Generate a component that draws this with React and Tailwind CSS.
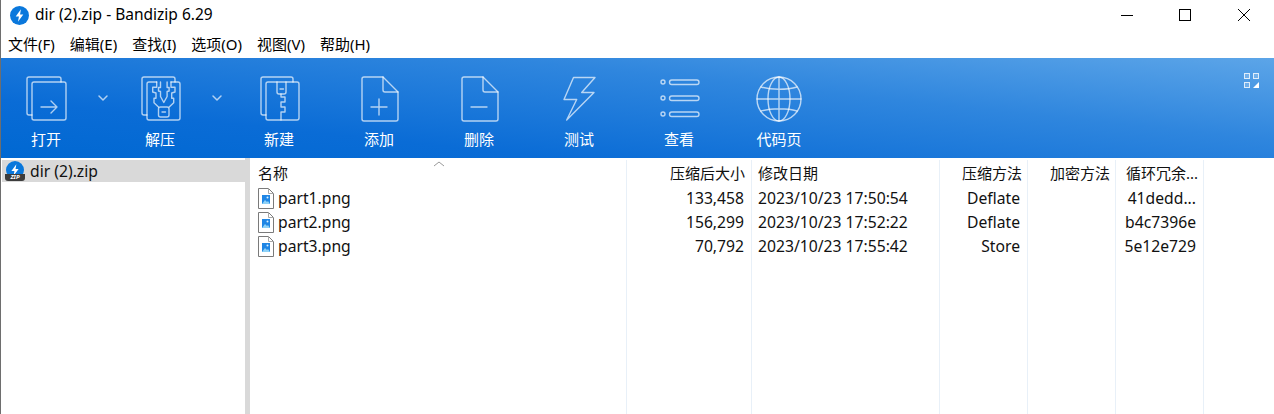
const stroke = { fill: 'none', stroke: 'white', strokeOpacity: 0.68, strokeWidth: 1.4, strokeLinejoin: 'round', strokeLinecap: 'round' };

const Tool = ({ w = 'w-[100px]', label, children }) => (
  <div className={`${w} flex flex-col items-center`}>
    <svg width="48" height="48" viewBox="0 0 48 48" {...stroke}>{children}</svg>
    <span className="mt-[6px] text-[15px] leading-[20px] text-white">{label}</span>
  </div>
);

const Chevron = () => (
  <div className="w-[24px] pt-[19px] flex justify-center">
    <svg width="12" height="8" viewBox="0 0 12 8" {...stroke} strokeWidth="1.5"><path d="M2 2l4 4 4-4" /></svg>
  </div>
);

const tools = [
  { label: '新建', icon: (
    <>
      <path d="M11 40H8a2 2 0 0 1-2-2V4a2 2 0 0 1 2-2h28a2 2 0 0 1 2 2v3" />
      <path d="M22 7h-9a2 2 0 0 0-2 2v34a2 2 0 0 0 2 2h29a2 2 0 0 0 2-2V9a2 2 0 0 0-2-2H31" />
      <path d="M22 7v10a2 2 0 0 0 2 2h5a2 2 0 0 0 2-2V7z" />
      <path d="M25 14h3.5" />
      <path d="M26 19v3h4v5h-4v5h4v5h-4v8" />
    </>
  ) },
  { label: '添加', icon: (
    <>
      <path d="M28 2H9a2 2 0 0 0-2 2v40a2 2 0 0 0 2 2h32a2 2 0 0 0 2-2V17z" />
      <path d="M28 2v13a2 2 0 0 0 2 2h13" />
      <path d="M24 24v16M16 32h16" />
    </>
  ) },
  { label: '删除', icon: (
    <>
      <path d="M28 2H9a2 2 0 0 0-2 2v40a2 2 0 0 0 2 2h32a2 2 0 0 0 2-2V17z" />
      <path d="M28 2v13a2 2 0 0 0 2 2h13" />
      <path d="M16 32h16" />
    </>
  ) },
  { label: '测试', icon: <path d="M18.5 2.5H40L26.7 17.5H39L11.7 45l10-20.5H9z" /> },
  { label: '查看', icon: (
    <>
      <circle cx="8" cy="7" r="2" />
      <circle cx="8" cy="23" r="2" />
      <circle cx="8" cy="39" r="2" />
      <rect x="14.5" y="5" width="29.5" height="4.5" rx="2.2" />
      <rect x="14.5" y="21" width="29.5" height="4.5" rx="2.2" />
      <rect x="14.5" y="37" width="29.5" height="4.5" rx="2.2" />
    </>
  ) },
  { label: '代码页', icon: (
    <>
      <circle cx="24" cy="24" r="22" />
      <ellipse cx="24" cy="24" rx="11" ry="22" />
      <path d="M24 2v44M2 24h44M6 12c10 3 26 3 36 0M6 36c10-3 26-3 36 0" />
    </>
  ) },
];

const columns = [
  { title: '压缩后大小', w: 'w-[125px]', head: 'text-right pr-[6px]', cls: 'text-right pr-[7px]', rows: ['133,458', '156,299', '70,792'] },
  { title: '修改日期', w: 'w-[188px]', head: 'text-left pl-[6px]', cls: 'text-left pl-[6px]', rows: ['2023/10/23 17:50:54', '2023/10/23 17:52:22', '2023/10/23 17:55:42'] },
  { title: '压缩方法', w: 'w-[88px]', head: 'text-right pr-[5px]', cls: 'text-right pr-[7px]', rows: ['Deflate', 'Deflate', 'Store'] },
  { title: '加密方法', w: 'w-[88px]', head: 'text-right pr-[5px]', cls: 'text-right pr-[7px]', rows: ['', '', ''] },
  { title: '循环冗余...', w: 'w-[88px]', head: 'text-right pr-[5px]', cls: 'text-right pr-[7px]', rows: ['41dedd...', 'b4c7396e', '5e12e729'] },
];

const files = ['part1.png', 'part2.png', 'part3.png'];

const Bolt = ({ size, cls = '' }) => (
  <svg className={cls} width={size} height={size} viewBox="0 0 20 20">
    <circle cx="10" cy="10" r="10" fill="#0a78dc" />
    <path d="M11.5 3.5 6 11h3.4l-1 5.5L14 9h-3.4z" fill="white" />
  </svg>
);

const FileIcon = () => (
  <svg width="16" height="21" viewBox="0 0 16 21">
    <path d="M.5.5h10l5 5v15H.5z" fill="white" stroke="#7a7a7a" />
    <path d="M10.5.5v5h5" fill="none" stroke="#a8a8a8" />
    <rect x="4" y="7" width="8" height="9" fill="#1f86e5" />
    <path d="M4 16l3-4 2 2 1-1 2 3z" fill="#8fd2f7" />
    <circle cx="9.5" cy="9.5" r="1" fill="#d9f0ff" />
  </svg>
);

const Cell = ({ children, cls = '' }) => (
  <div className={`h-[24px] leading-[24px] text-[15.7px] whitespace-nowrap ${cls}`}>{children}</div>
);

export default function App() {
  return (
    <div className="w-[1274px] h-[414px] overflow-hidden bg-white border-l border-[#6e6e6e] text-[15px] text-[#111] font-['Noto_Sans','Noto_Sans_CJK_SC',sans-serif] flex flex-col">
      {/* title bar */}
      <div className="h-[30px] flex items-center shrink-0">
        <Bolt size={19} cls="ml-[9px]" />
        <span className="ml-[6px] text-[15.5px] text-black">dir (2).zip - Bandizip 6.29</span>
        <div className="ml-auto flex items-center pr-px">
          <div className="w-[56px] flex justify-center"><div className="w-[12px] h-px bg-black" /></div>
          <div className="w-[60px] flex justify-center"><div className="w-[12px] h-[12px] border border-black" /></div>
          <div className="w-[58px] flex justify-center">
            <svg width="12" height="12" viewBox="0 0 12 12" stroke="black"><path d="M0 0l12 12M12 0L0 12" /></svg>
          </div>
        </div>
      </div>
      {/* menu */}
      <div className="h-[28px] flex items-center pl-[7px] gap-[15px] text-[15px] text-black shrink-0">
        {['文件(F)', '编辑(E)', '查找(I)', '选项(O)', '视图(V)', '帮助(H)'].map(m => <span key={m}>{m}</span>)}
      </div>
      {/* toolbar */}
      <div className="h-[100px] shrink-0 flex pt-[17px] bg-[linear-gradient(186deg,#5ca5e8_0%,#2f86de_35%,#0a6cd6_75%,#0068d2_100%)]">
        <Tool w="w-[90px]" label="打开">
          <path d="M10 40H7a2 2 0 0 1-2-2V4a2 2 0 0 1 2-2h30a2 2 0 0 1 2 2v3" />
          <rect x="10" y="7" width="34" height="38" rx="2" />
          <path d="M19 32h16M29 26l6 6-6 6" />
        </Tool>
        <Chevron />
        <Tool w="w-[90px]" label="解压">
          <path d="M11 40H8a2 2 0 0 1-2-2V4a2 2 0 0 1 2-2h29a2 2 0 0 1 2 2v3" />
          <path d="M20.7 7H13a2 2 0 0 0-2 2v34a2 2 0 0 0 2 2h29a2 2 0 0 0 2-2V9a2 2 0 0 0-2-2h-7" />
          <path d="M20.7 7v5.3h-4V17l3.3 1v5.3h-2v4.4l4.5 4.3M35 7v5.3h4V17l-3.3 1v5.3h2v4.4L33.2 32" />
          <path d="M24.5 7v5.5h-2V16l2 .5v5l3.3 6 3.3-6v-5l2-.5v-3.5h-2V7" />
          <rect x="22.5" y="32" width="10.5" height="10" rx="2" />
          <path d="M26 37h3.5" />
        </Tool>
        <Chevron />
        {tools.map(t => <Tool key={t.label} label={t.label}>{t.icon}</Tool>)}
        <div className="ml-auto pr-[14px]">
          <svg className="-mt-[2px]" width="16" height="16" viewBox="0 0 16 16" fill="white" fillOpacity="0.2" stroke="white" strokeOpacity="0.8">
            <rect x="0.5" y="0.5" width="5" height="5" />
            <rect x="9.5" y="0.5" width="5" height="5" />
            <rect x="0.5" y="9.5" width="5" height="5" />
            <path d="M15 9v6H9z" fill="white" fillOpacity="1" stroke="none" />
          </svg>
        </div>
      </div>
      {/* body */}
      <div className="flex-1 flex min-h-0 pt-[2px]">
        <div className="w-[244px] shrink-0 pl-px">
          <div className="h-[22px] bg-[#d9d9d9] flex items-center pl-[3px]">
            <div className="relative w-[20px] h-[20px]">
              <Bolt size={18} cls="ml-px" />
              <div className="absolute left-0 right-0 bottom-0 h-[7px] bg-[#3c3c3c] rounded-b-[3px] text-[6px] leading-[7px] text-center font-bold italic text-white">ZIP</div>
            </div>
            <span className="ml-[5px] pt-px text-[15.7px]">dir (2).zip</span>
          </div>
        </div>
        <div className="w-[5px] shrink-0 -mt-[2px] bg-[#d9d9d9]" />
        <div className="relative flex-1 flex min-w-0 -mt-[2px] pt-[2px]">
          <svg className="absolute left-[183px] top-[3px]" width="12" height="6" viewBox="0 0 12 6" fill="none" stroke="#9a9a9a"><path d="M1 5l5-4 5 4" /></svg>
          <div className="w-[376px] shrink-0">
            <div className="h-[26px] leading-[26px] pl-[8px]">名称</div>
            {files.map(f => (
              <Cell key={f} cls="flex items-center pl-[8px]">
                <FileIcon />
                <span className="ml-[4px]">{f}</span>
              </Cell>
            ))}
          </div>
          {columns.map(c => (
            <div key={c.title} className={`${c.w} shrink-0 border-l border-[#e8f0f8]`}>
              <div className={`h-[26px] leading-[26px] whitespace-nowrap ${c.head}`}>{c.title}</div>
              {c.rows.map((r, i) => <Cell key={i} cls={c.cls}>{r}</Cell>)}
            </div>
          ))}
          <div className="border-l border-[#e8f0f8]" />
        </div>
      </div>
    </div>
  );
}
